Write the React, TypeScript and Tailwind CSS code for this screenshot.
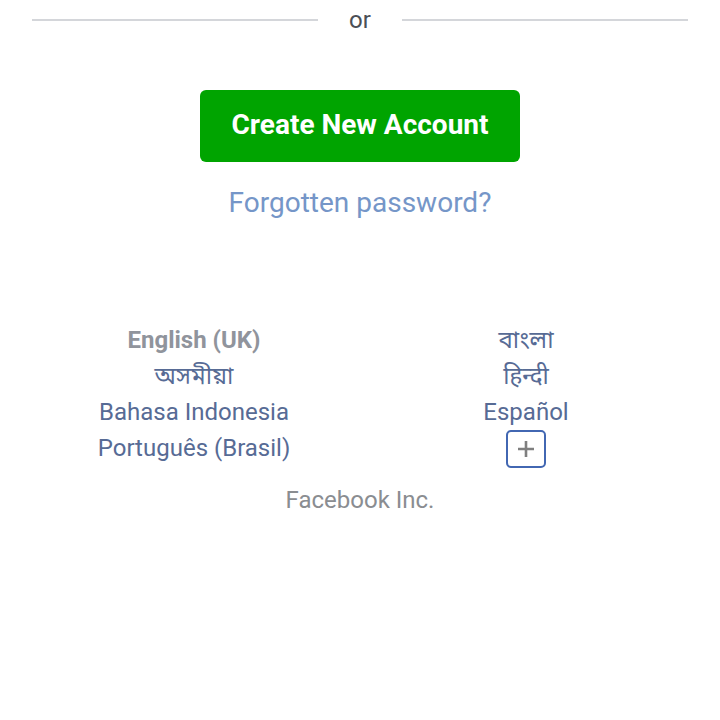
import React from "react";

export default function App() {
  const font = { fontFamily: "Roboto, 'Noto Sans', 'Noto Sans Bengali', 'Noto Sans Devanagari', sans-serif" };
  return (
    <div className="w-[720px] h-[720px] bg-white" style={font}>
      <div className="flex items-center px-[32px] pt-[6px]">
        <div className="flex-1 h-[2px] bg-[#d4d6da]" />
        <div className="w-[84px] text-center text-[24px] leading-[28px] text-[#4b4f56]">or</div>
        <div className="flex-1 h-[2px] bg-[#d4d6da]" />
      </div>
      <div className="flex justify-center mt-[56px]">
        <button className="w-[320px] h-[72px] pb-[2px] rounded-[6px] bg-[#00a400] text-white font-bold text-[28px] leading-[70px]">
          Create New Account
        </button>
      </div>
      <div className="text-center mt-[25px] text-[28px] leading-[32px] text-[#7596c8]">Forgotten password?</div>
      <div className="grid grid-cols-2 px-[28px] mt-[103px] text-[24px] leading-[36px] text-center text-[#576b95]">
        <div className="flex flex-col items-center">
          <div className="font-bold text-[#90949c]">English (UK)</div>
          <div>অসমীয়া</div>
          <div>Bahasa Indonesia</div>
          <div>Português (Brasil)</div>
        </div>
        <div className="flex flex-col items-center">
          <div>বাংলা</div>
          <div>हिन्दी</div>
          <div>Español</div>
          <div className="h-[36px] flex items-center">
            <div className="w-[40px] h-[38px] mt-[2px] border-2 border-[#4267b2] rounded-[5px] flex items-center justify-center">
              <svg width="18" height="18" viewBox="0 0 18 18">
                <path d="M9 1v16M1 9h16" stroke="#7f7f7f" strokeWidth="2.6" />
              </svg>
            </div>
          </div>
        </div>
      </div>
      <div className="text-center mt-[18px] text-[24px] leading-[32px] text-[#8a8d91]">Facebook Inc.</div>
    </div>
  );
}
